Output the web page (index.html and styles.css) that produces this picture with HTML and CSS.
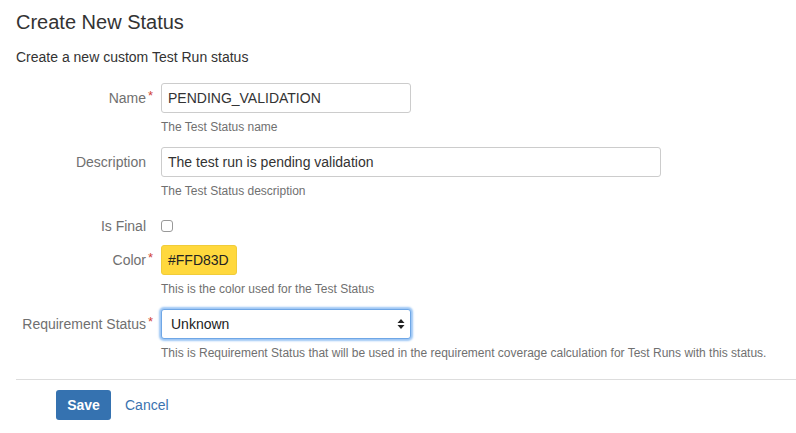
FILE: index.html
```html
<!DOCTYPE html>
<html>
<head>
<meta charset="utf-8">
<link rel="stylesheet" href="styles.css">
</head>
<body>
<div class="page">
  <h1 class="title">Create New Status</h1>
  <p class="intro">Create a new custom Test Run status</p>
  <form class="form">
    <div class="row">
      <label class="label"><span class="req">Name</span></label>
      <div class="field">
        <div class="input short">PENDING_VALIDATION</div>
        <div class="help">The Test Status name</div>
      </div>
    </div>
    <div class="row">
      <label class="label">Description</label>
      <div class="field">
        <div class="input long">The test run is pending validation</div>
        <div class="help">The Test Status description</div>
      </div>
    </div>
    <div class="row row-check">
      <label class="label">Is Final</label>
      <div class="field check-field">
        <span class="checkbox"></span>
      </div>
    </div>
    <div class="row">
      <label class="label"><span class="req">Color</span></label>
      <div class="field">
        <div class="swatch">#FFD83D</div>
        <div class="help">This is the color used for the Test Status</div>
      </div>
    </div>
    <div class="row">
      <label class="label"><span class="req">Requirement Status</span></label>
      <div class="field">
        <div class="select">
          <span>Unknown</span>
          <svg class="arrows" width="8" height="12" viewBox="0 0 8 12"><path d="M4 1 L7.5 5 H0.5 Z" fill="#222"/><path d="M4 11 L7.5 7 H0.5 Z" fill="#222"/></svg>
        </div>
        <div class="help">This is Requirement Status that will be used in the requirement coverage calculation for Test Runs with this status.</div>
      </div>
    </div>
    <hr class="sep">
    <div class="actions">
      <button type="button" class="btn">Save</button>
      <a class="cancel" href="#">Cancel</a>
    </div>
  </form>
</div>
</body>
</html>
```

FILE: styles.css
```css
html, body {
  margin: 0;
  padding: 0;
  background: #fff;
}
body {
  font-family: "Liberation Sans", Arial, sans-serif;
  color: #333;
  font-size: 14px;
}
.page {
  padding: 0 0 0 16px;
}
.title {
  font-size: 20px;
  line-height: 24px;
  font-weight: normal;
  margin: 10px 0 0;
  color: #333;
}
.intro {
  margin: 13px 0 0;
  line-height: 20px;
  font-size: 14px;
}
.form {
  margin-top: 16px;
}
.row {
  display: flex;
  align-items: flex-start;
  margin-bottom: 12px;
}
.row-check {
  margin-bottom: 4px;
}
.label {
  width: 130px;
  flex: none;
  text-align: right;
  color: #707070;
  line-height: 30px;
  margin-right: 15px;
}
.req {
  position: relative;
}
.req::after {
  content: "*";
  position: absolute;
  color: #d04437;
  font-size: 13px;
  top: -9px;
  right: -7px;
}
.field {
  display: flex;
  flex-direction: column;
  align-items: flex-start;
}
.input {
  box-sizing: border-box;
  height: 30px;
  border: 1px solid #ccc;
  border-radius: 3px;
  padding: 0 6px;
  line-height: 28px;
  color: #333;
  background: #fff;
}
.short { width: 250px; }
.long { width: 500px; }
.help {
  margin-top: 6px;
  font-size: 12px;
  line-height: 16px;
  color: #707070;
}
.check-field {
  height: 30px;
  justify-content: center;
}
.checkbox {
  display: block;
  box-sizing: border-box;
  width: 12px;
  height: 12px;
  border: 1px solid #999;
  border-radius: 3px;
  background: #fff;
}
.swatch {
  box-sizing: border-box;
  width: 76px;
  height: 30px;
  background: #ffd83d;
  border: 1px solid #f0cc3a;
  border-radius: 3px;
  padding: 0 6px;
  line-height: 28px;
  color: #222;
}
.select {
  box-sizing: border-box;
  width: 250px;
  height: 30px;
  border: 1px solid #6fa7e6;
  border-radius: 3px;
  box-shadow: 0 0 2px 2px #9cc6f5;
  display: flex;
  align-items: center;
  justify-content: space-between;
  padding: 0 5px 0 9px;
  color: #222;
  background: #fff;
}
.arrows {
  display: block;
}
.sep {
  border: 0;
  border-top: 1px solid #ddd;
  margin: 18px 0 10px;
  height: 0;
}
.actions {
  display: flex;
  align-items: center;
  padding-left: 40px;
}
.btn {
  box-sizing: border-box;
  width: 55px;
  height: 30px;
  border: 0;
  border-radius: 3px;
  background: #3572b0;
  color: #fff;
  font-family: "Liberation Sans", Arial, sans-serif;
  font-weight: bold;
  font-size: 14px;
  padding: 0;
  margin-right: 14px;
}
.cancel {
  color: #3b73af;
  text-decoration: none;
  font-size: 14px;
}
```
